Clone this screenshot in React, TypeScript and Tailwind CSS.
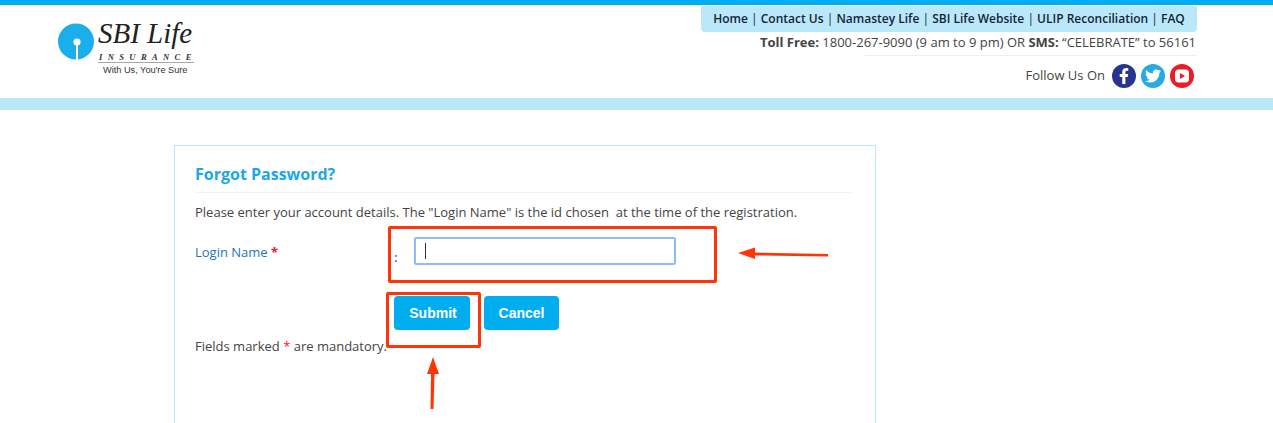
import React from "react";
import { FaFacebookF, FaTwitter } from "react-icons/fa";

const NAV = ["Home", "Contact Us", "Namastey Life", "SBI Life Website", "ULIP Reconciliation", "FAQ"];

function Logo() {
  return (
    <div className="flex items-start">
      <svg width="36" height="37" viewBox="0 0 36 37" className="mt-[18px]">
        <circle cx="18" cy="18.5" r="18" fill="#1aaeed" />
        <circle cx="19" cy="19" r="3.6" fill="#fff" />
        <rect x="18" y="20" width="2" height="17" fill="#fff" />
      </svg>
      <div className="ml-[4px] mt-[11px] flex w-[96px] flex-col">
        <div className="whitespace-nowrap font-['Liberation_Serif'] text-[29px] leading-[34px] text-[#222] italic">
          SBI Life
        </div>
        <div className="mt-[3px] whitespace-nowrap border-b border-[#a8a8a8] pb-[1px] pl-[1px] font-['Liberation_Serif'] text-[8.5px] leading-[8px] font-bold tracking-[5.4px] text-[#333] italic">
          INSURANCE
        </div>
        <div className="mt-[2px] pl-[5px] whitespace-nowrap font-['Liberation_Sans'] text-[9.2px] leading-[11px] text-[#333]">
          With Us, You're Sure
        </div>
      </div>
    </div>
  );
}

function Header() {
  return (
    <header className="border-t-[5px] border-[#00aeef]">
      <div className="flex h-[93px] justify-between pr-[76px] pl-[58px]">
        <Logo />
        <div className="flex w-[496px] flex-col items-end">
          <nav className="mt-[1px] flex h-[26px] w-full items-center justify-center rounded-b-[4px] bg-[#bbe8f9] text-[12px] font-semibold whitespace-pre text-[#14233a]">
            {NAV.map((n, i) => (
              <span key={n}>
                {i > 0 && <span className="font-normal"> | </span>}
                {n}
              </span>
            ))}
          </nav>
          <p className="mt-[1px] pr-[1px] text-[13px] leading-[18px] whitespace-pre text-[#444]">
            <b>Toll Free:</b> 1800-267-9090 (9 am to 9 pm) OR <b>SMS:</b> “CELEBRATE” to 56161
          </p>
          <div className="mt-[4px] h-px w-[332px] bg-[#eee]" />
          <div className="mt-[8px] flex items-center pr-[3px]">
            <span className="mr-[7px] text-[13px] text-[#444]">Follow Us On</span>
            <div className="flex gap-[5px]">
              <span className="flex h-[24px] w-[24px] items-center justify-center rounded-full bg-[#29348e] text-[16px] text-white">
                <FaFacebookF />
              </span>
              <span className="flex h-[24px] w-[24px] items-center justify-center rounded-full bg-[#27a9e1] text-[16px] text-white">
                <FaTwitter />
              </span>
              <span className="flex h-[24px] w-[24px] items-center justify-center rounded-full bg-[#ed1c24]">
                <svg width="14" height="14" viewBox="0 0 14 14">
                  <rect x="0" y="0.5" width="14" height="13" rx="3.5" fill="#fff" />
                  <path d="M5 4 L10 7 L5 10 Z" fill="#ed1c24" />
                </svg>
              </span>
            </div>
          </div>
        </div>
      </div>
      <div className="h-[12px] bg-[#bbe8f9]" />
    </header>
  );
}

function Annotations() {
  return (
    <>
      <div className="absolute top-[226px] left-[388px] h-[57px] w-[329px] rounded-[2px] border-[3px] border-[#ff3408]" />
      <div className="absolute top-[292px] left-[386px] h-[56px] w-[95px] rounded-[2px] border-[3px] border-[#ff3408]" />
      <svg className="absolute top-0 left-0" width="1273" height="423" fill="#ff3408">
        <path d="M738 253 L755 247.5 L755 252.5 L828 254 L828 256.5 L755 255.5 L755 259 Z" />
        <path d="M433 357 L439 374 L434.5 374 L433.5 409 L430.5 409 L431 374 L427 374 Z" />
      </svg>
    </>
  );
}

export default function App() {
  return (
    <div className="relative h-[423px] overflow-hidden bg-white font-['Open_Sans',sans-serif]">
      <Header />
      <main className="pl-[174px]">
        <section className="mt-[35px] h-[400px] w-[702px] border border-[#bbe8f9] pr-[22px] pl-[20px]">
          <h1 className="mt-[17px] border-b border-[#e8f6fc] pb-[7px] text-[16px] leading-[22px] font-bold text-[#1ea7e8]">
            Forgot Password?
          </h1>
          <p className="mt-[9px] text-[13px] leading-[20px] whitespace-pre text-[#444]">
            Please enter your account details. The "Login Name" is the id chosen  at the time of the registration.
          </p>
          <div className="mt-[15px] flex items-start">
            <label className="mt-[5px] w-[199px] text-[13px] leading-[20px] text-[#1b75bc]">
              Login Name <span className="font-bold text-[#f0142f]">*</span>
            </label>
            <span className="mt-[10px] w-[20px] text-[13px] leading-[20px] font-semibold text-[#1b75bc]">:</span>
            <div className="relative">
              <input className="block h-[28px] w-[262px] rounded-[2px] border-2 border-[#8ebcf7] bg-white outline-none" />
              <span className="absolute top-[6px] left-[11px] h-[16px] w-px bg-[#333]" />
            </div>
          </div>
          <div className="mt-[29px] ml-[199px] flex gap-[14px] font-['Liberation_Sans'] text-[14px] font-bold text-white">
            <button className="h-[34px] w-[76px] rounded-[4px] bg-[#00aeef] pl-[2px]">Submit</button>
            <button className="h-[34px] w-[75px] rounded-[4px] bg-[#00aeef]">Cancel</button>
          </div>
          <p className="mt-[6px] text-[13px] leading-[20px] text-[#444]">
            Fields marked <span className="text-[#f0142f]">*</span> are mandatory.
          </p>
        </section>
      </main>
      <Annotations />
    </div>
  );
}
